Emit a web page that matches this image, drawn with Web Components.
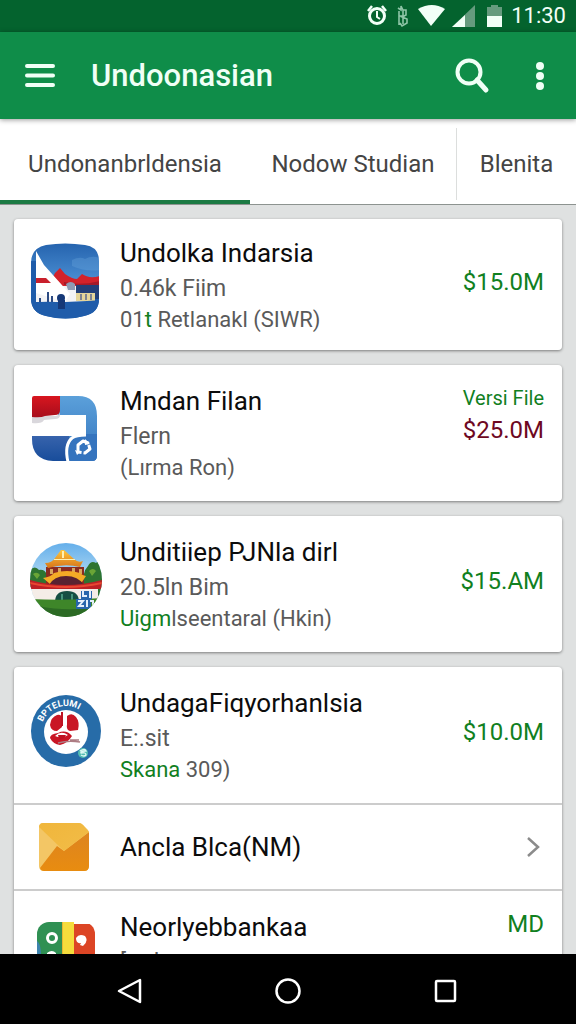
<!DOCTYPE html>
<html lang="id">
<head>
<meta charset="utf-8">
<meta name="viewport" content="width=device-width, initial-scale=1">
<title>Undoonasian</title>
<style>
  html, body {
    height: 100%;
    margin: 0;
  }
  body {
    font-family: Roboto, "Liberation Sans", sans-serif;
    background: #dfe1e1;
    --green: #0f8d49;
    --green-dark: #04632e;
    --green-text: #11801f;
    --red-text: #6e0822;
  }
  .hl {
    color: var(--green-text);
  }
</style>
</head>
<body>
<app-screen>
  <status-bar slot="top" time="11:30"></status-bar>
  <app-bar slot="top">Undoonasian</app-bar>
  <tab-strip slot="top">
    <tab-item selected>Undonanbrldensia</tab-item>
    <tab-item>Nodow Studian</tab-item>
    <tab-item divided>Blenita</tab-item>
  </tab-strip>

  <app-card>
    <app-row compact>
      <svg slot="icon" width="72" height="76" viewBox="0 0 72 76" aria-hidden="true">
        <defs>
          <linearGradient id="sky" x1="0" y1="0" x2="0" y2="1">
            <stop offset="0" stop-color="#2563ae"/><stop offset=".5" stop-color="#4a8ed2"/><stop offset=".75" stop-color="#1f58a4"/><stop offset="1" stop-color="#1d62ae"/>
          </linearGradient>
          <clipPath id="squircle"><path d="M1 20Q1 5 16 2Q35-1 55 2Q69 4 69 18V56Q69 70 54 73Q36 78 16 73Q1 70 1 55Z"/></clipPath>
        </defs>
        <g clip-path="url(#squircle)">
          <path fill="url(#sky)" d="M0 0h72v76H0z"/>
          <path fill="#6ba7de" d="M42 17q8-4 13-1q7-4 15-1v12q-14 2-28-4z" opacity=".35"/>
          <path fill="#f3f3f5" d="M6 39h58v20H6z"/>
          <path fill="#d3222b" d="M22 36l3-6l5-5l5 6q7 5 12 5l5-5q7 5 18 2v10H28z"/>
          <path fill="#a51a28" d="M34 39q16 4 36-1v4H34z"/>
          <path fill="#233f78" d="M46 42h24v14H46z"/>
          <path fill="#e5d59a" d="M46 50h19v8H46z"/>
          <path fill="#7d8292" d="M50 51h2v6h-2zM55 51h2v6h-2zM60 51h2v6h-2z"/>
          <path fill="#8e9bb4" d="M36 41q5-4 9 0v6h-7z"/>
          <path fill="#fff" d="M6 8L14 22L40 51L35 59L6 50z"/>
          <path fill="#c9202c" d="M6 35h10l5 5H6z"/>
          <path fill="#2c4a82" d="M17 49h2v11h-2zM21 53h2v6h-2zM9 55h2v4H9z"/>
          <path fill="#1f5caa" d="M0 60q14-2 26-1q20 0 46-2v20H0zM0 18h6v43H0z"/>
          <circle cx="31" cy="55" r="4" fill="#153877"/><path fill="#153877" d="M28 57h7v9h-7z"/>
        </g>
      </svg>
      Undolka Indarsia
      <span slot="size">0.46k Fiim</span>
      <span slot="note">01<span class="hl">t</span> Retlanakl (SIWR)</span>
      <span slot="price" class="hl">$15.0M</span>
    </app-row>
  </app-card>

  <app-card>
    <app-row>
      <svg slot="icon" width="72" height="72" viewBox="0 0 72 72" aria-hidden="true">
        <defs>
          <linearGradient id="blueLight" x1="0" y1="0" x2="0" y2="1"><stop offset="0" stop-color="#5ba0da"/><stop offset="1" stop-color="#3474bd"/></linearGradient>
          <linearGradient id="blueDeep" x1="0" y1="0" x2="0" y2="1"><stop offset="0" stop-color="#3763ac"/><stop offset="1" stop-color="#184d9b"/></linearGradient>
          <linearGradient id="flagRed" x1="0" y1="0" x2="0" y2="1"><stop offset="0" stop-color="#d8161f"/><stop offset="1" stop-color="#a70d1c"/></linearGradient>
        </defs>
        <path fill="url(#blueLight)" d="M28 3h20q19 0 19 20v40q0 5-5 5H39V42h17V22H28z"/>
        <path fill="#fff" d="M3 22h49q3 0 3 3v18H3z"/>
        <path fill="url(#blueDeep)" d="M2 43h37v25H23Q2 67 2 46z"/>
        <path fill="#cfcdd3" d="M2 23h24q4-1 4-5v4q0 4-5 4l-11 1q-2 4-12 3z" opacity=".8"/>
        <path fill="url(#flagRed)" d="M4 3h26v14q0 5-5 5l-10 1q-4 2-13 1V5q0-2 2-2z"/>
        <path fill="#3574be" d="M37 68q-3-16 5-23q4-4 14-4h11v22q0 5-5 5z"/>
        <path fill="none" stroke="#fff" stroke-width="3" d="M38 69q-4-17 4-24q4-3 14-3"/>
        <path fill="none" stroke="#fff" stroke-width="3" stroke-linejoin="round" stroke-dasharray="12 2" d="M48 52l5-4l5 2l2 6l-5 4l-7-1z"/>
        <path fill="#fff" d="M45 57l5 2l-3 3zM55 46l5 5l-5 1z"/>
      </svg>
      Mndan Filan
      <span slot="size">Flern</span>
      <span slot="note">(Lırma Ron)</span>
      <span slot="tag" class="hl">Versi File</span>
      <span slot="price" style="color: var(--red-text)">$25.0M</span>
    </app-row>
  </app-card>

  <app-card>
    <app-row>
      <svg slot="icon" width="72" height="76" viewBox="0 0 72 76" aria-hidden="true">
        <defs>
          <linearGradient id="air" x1="0" y1="0" x2="0" y2="1"><stop offset="0" stop-color="#63aeea"/><stop offset=".5" stop-color="#b4dbf4"/></linearGradient>
          <linearGradient id="roof" x1="0" y1="0" x2="0" y2="1"><stop offset="0" stop-color="#ffc63a"/><stop offset="1" stop-color="#d7761b"/></linearGradient>
          <clipPath id="roundPark"><ellipse cx="36" cy="38" rx="36" ry="37"/></clipPath>
        </defs>
        <g clip-path="url(#roundPark)">
          <path fill="url(#air)" d="M0 0h72v76H0z"/>
          <path fill="#2e7431" d="M0 28q5-5 9 0q6-1 8 5l2 12H0zM54 32q1-5 4-8q3-6 8-3q4-4 6 4v40H54z"/>
          <path fill="#6aa536" d="M3 32q4-3 7 1l-3 4zM59 29q4-4 7 0l-4 5z"/>
          <path fill="#8b2b21" d="M16 25h38v17H16z"/>
          <path fill="#d9a75e" d="M20 27h3v5h-3zM28 26h3v4h-3zM42 26h3v4h-3zM49 27h3v5h-3z"/>
          <path fill="url(#roof)" d="M31 8h3l10 9q4 4 9 2l-3 6q-15-4-32 1l-3-5q7 0 10-5z"/>
          <path fill="#f4ab26" d="M13 36q8-1 11-5q13-4 26 0q3 3 6 3l-4 6q-16-7-32 2z"/>
          <path fill="#582231" d="M19 43q5-9 17-9t18 9z"/>
          <path fill="#fff0b1" d="M24 17h21v1H24zM32 9h2v7h-2z"/>
          <path fill="#bd2025" d="M0 38q35 10 72 0v9H0z"/>
          <path fill="#e84631" d="M0 40q35 8 72 0v2q-37 8-72 0z"/>
          <path fill="#f5ede7" d="M2 47h66v13H2z"/>
          <path fill="#174f43" d="M25 60q0-11 12-11t12 11z"/><path fill="#47957c" d="M31 52h2v8h-2zM41 52h2v8h-2z"/>
          <path fill="#3e8629" d="M0 57q36 2 72-1v20H0z"/><path fill="#2c6a24" d="M8 64q30 6 56 1v12H8z"/>
          <path fill="#2765ac" d="M51 49h11v8H51zM46 57h15v10H46z"/>
          <path stroke="#e4effb" stroke-width="2" fill="none" d="M53 48v6h4M60 48v8M48 59h5l-4 5h5M57 58v7M60 59h3v5"/>
        </g>
      </svg>
      Unditiiep PJNla dirl
      <span slot="size">20.5ln Bim</span>
      <span slot="note"><span class="hl">Uigm</span>lseentaral (Hkin)</span>
      <span slot="price" class="hl">$15.AM</span>
    </app-row>
  </app-card>

  <app-card>
    <app-row>
      <svg slot="icon" width="72" height="74" viewBox="0 0 72 74" aria-hidden="true">
        <defs>
          <path id="ring" d="M11 37A25 25 0 0 1 61 37"/>
        </defs>
        <ellipse cx="36" cy="37" rx="35" ry="36" fill="#276ca8"/>
        <circle cx="36" cy="38" r="22" fill="#fff"/>
        <text fill="#fff" font-family="Roboto, sans-serif" font-size="9" font-weight="700"><textPath href="#ring" startOffset="9">BPTELUMI</textPath></text>
        <path fill="#c91625" d="M20 31q1-8 7-10q5-1 5 4v8l-5 4q-6 0-7-6zM37 22q5-4 9 1q4 5 2 13l-8 1q-4-1-3-7z"/>
        <path fill="#c91625" d="M20 44q0-4 8-5q8-4 14 3q-4 7-12 9q-7-1-10-7z"/>
        <path fill="#fff" d="M25 42q6-6 13-1q-6 4-13 1z"/>
        <path fill="#be1222" d="M28 41h8q-2 5-7 4zM31 18h2v14h-2z"/>
        <path fill="none" stroke="#ad7c83" stroke-width="1.5" d="M28 49q10-3 22-1M40 46h9"/>
        <circle cx="53" cy="59" r="5" fill="#54bdb2"/>
        <path fill="none" stroke="#e1faf5" stroke-width="1.3" d="M50 57q5-3 6 0q-6 0-5 2q5-1 5 2q-2 2-5 0"/>
      </svg>
      UndagaFiqyorhanlsia
      <span slot="size">E:.sit</span>
      <span slot="note"><span class="hl">Skana</span> 309)</span>
      <span slot="price" class="hl">$10.0M</span>
    </app-row>
    <link-row href="#ancla">
      <svg slot="icon" width="52" height="50" viewBox="0 0 52 50" aria-hidden="true">
        <defs>
          <linearGradient id="flap" x1="0" y1="0" x2="1" y2="1"><stop offset="0" stop-color="#f0b63b"/><stop offset="1" stop-color="#f2bc48"/></linearGradient>
          <linearGradient id="pocket" x1="0" y1="0" x2="0" y2="1"><stop offset="0" stop-color="#dd8420"/><stop offset="1" stop-color="#e88c10"/></linearGradient>
        </defs>
        <path fill="#f3c665" d="M5 1h36q2 0 4 2l5 5q1 1 1 4v32q0 5-5 5H6q-5 0-5-5V5q0-4 4-4z"/>
        <path fill="url(#pocket)" d="M19 24l7 5l25-19v34q0 5-5 5H6q-3 0-4-3z"/>
        <path fill="url(#flap)" d="M1 5q1-4 4-4h36q2 0 4 2l6 7L26 29z"/>
      </svg>
      Ancla Blca(NM)
    </link-row>
    <app-row style="--price-row: 40px">
      <svg slot="icon" width="60" height="66" viewBox="0 0 60 66" aria-hidden="true">
        <defs><clipPath id="tile"><rect x="1" y="0" width="58" height="66" rx="12"/></clipPath></defs>
        <g clip-path="url(#tile)">
          <path fill="#2f9053" d="M0 0h28v66H0z"/><path fill="#3d83ad" d="M0 18q5 3 5 15v33H0z"/>
          <path fill="#f5dc3c" d="M27 0h11v66H27z"/>
          <path fill="#dc4525" d="M38 2h22v64H38z"/><path fill="#e7b534" d="M26 0h1v66h-1z"/>
        </g>
        <circle cx="16" cy="16" r="4.5" fill="none" stroke="#fff" stroke-width="3"/>
        <path fill="#fff" d="M11 31q5-4 9 0v5h-9zM40 16q3-5 9-2q4 5-2 10l-3-1l1-2q-5 1-5-5z"/>
      </svg>
      Neorlyebbankaa
      <span slot="size">[ttalr</span>
      <span slot="tag" class="hl" style="font-size: 24px">MD</span>
      <span slot="price">$27.4M</span>
    </app-row>
  </app-card>

  <nav-bar slot="bottom"></nav-bar>
</app-screen>

<script>
  class BaseElement extends HTMLElement {
    connectedCallback() {
      if (this.shadowRoot) return;
      this.attachShadow({ mode: 'open' });
      this.shadowRoot.innerHTML = this.render();
    }
  }

  class AppScreen extends BaseElement {
    render() {
      return `
        <style>
          :host {
            display: flex;
            flex-direction: column;
            height: 100vh;
          }
          header {
            position: relative;
            flex: none;
          }
          main {
            flex: 1;
            min-height: 0;
            box-sizing: border-box;
            overflow-y: auto;
            scrollbar-width: none;
            display: flex;
            flex-direction: column;
            gap: 15px;
            padding: 14px 14px 0;
          }
        </style>
        <header><slot name="top"></slot></header>
        <main><slot></slot></main>
        <slot name="bottom"></slot>
      `;
    }
  }
  customElements.define('app-screen', AppScreen);

  class StatusBar extends BaseElement {
    render() {
      return `
        <style>
          :host {
            display: flex;
            align-items: center;
            justify-content: flex-end;
            gap: 6px;
            height: 32px;
            padding-right: 10px;
            background: var(--green-dark);
            color: #f2fff7;
            font-size: 22px;
            line-height: 32px;
          }
          svg { display: block; }
        </style>
        <svg width="138" height="26" viewBox="0 0 138 26" aria-hidden="true">
          <g fill="none" stroke="#f2fff7" stroke-width="3">
            <circle cx="10" cy="13" r="7.5"/>
            <path d="M1 8l4-5M15 3l4 5" stroke-width="2.5"/>
            <path d="M10 8v6l3 2" stroke-width="2"/>
          </g>
          <path d="M31 5l3 2V3l2 4h3v5l-4 2l5 2v4l-5 3l-2-3M32 8v14M36 7v14M32 13h6" fill="none" stroke="#8fc5a7" stroke-width="1.6"/>
          <path fill="#f2fff7" d="M51 6q14-8 27 0L64 23z"/>
          <path fill="#669b7e" d="M108 2v22H85z"/>
          <path fill="#f2fff7" d="M98 12v12H85z"/>
          <path fill="#669b7e" d="M120 4h4V2h7v2h4v10h-15z"/>
          <path fill="#f2fff7" d="M120 13h15v11h-15z"/>
        </svg>
        <time>${this.getAttribute('time')}</time>
      `;
    }
  }
  customElements.define('status-bar', StatusBar);

  class AppBar extends BaseElement {
    render() {
      return `
        <style>
          :host {
            display: flex;
            align-items: center;
            height: 87px;
            padding: 0 16px;
            background: var(--green);
            color: #f0fff6;
            position: relative;
            z-index: 1;
            box-shadow: 0 1px 5px rgba(0, 0, 0, .4);
          }
          h1 {
            flex: 1;
            margin: 0 0 0 27px;
            font-size: 31px;
            font-weight: 500;
            line-height: 40px;
          }
          button {
            flex: none;
            width: 48px;
            height: 48px;
            padding: 0;
            border: 0;
            background: none;
            color: inherit;
            display: grid;
            place-items: center;
          }
          .search { margin-right: 20px; }
          .more { margin-right: -4px; }
        </style>
        <button type="button" aria-label="Menu">
          <svg width="30" height="26" viewBox="0 0 30 26"><path d="M2 3h26M2 12.5h26M2 22h26" stroke="currentColor" stroke-width="4" stroke-linecap="round"/></svg>
        </button>
        <h1><slot></slot></h1>
        <button type="button" class="search" aria-label="Cari">
          <svg width="36" height="36" viewBox="0 0 36 36" fill="none" stroke="currentColor"><circle cx="15" cy="14" r="11.5" stroke-width="4"/><path d="M23 22l9 10" stroke-width="5" stroke-linecap="round"/></svg>
        </button>
        <button type="button" class="more" aria-label="Lainnya">
          <svg width="10" height="30" viewBox="0 0 10 30" fill="currentColor"><circle cx="5" cy="5" r="4"/><circle cx="5" cy="15" r="4"/><circle cx="5" cy="25" r="4"/></svg>
        </button>
      `;
    }
  }
  customElements.define('app-bar', AppBar);

  class TabStrip extends BaseElement {
    render() {
      this.setAttribute('role', 'tablist');
      return `
        <style>
          :host {
            display: grid;
            grid-template-columns: 250fr 206fr 120fr;
            height: 86px;
            box-sizing: border-box;
            background: #fff;
            border-bottom: 1px solid #8d9390;
          }
        </style>
        <slot></slot>
      `;
    }
  }
  customElements.define('tab-strip', TabStrip);

  class TabItem extends BaseElement {
    render() {
      const selected = this.hasAttribute('selected');
      return `
        <style>
          :host { display: flex; }
          button {
            flex: 1;
            min-width: 0;
            padding: 8px 0 0;
            border: 0;
            border-bottom: 4px solid transparent;
            background: none;
            color: #444;
            font: 400 24px/32px Roboto, "Liberation Sans", sans-serif;
            white-space: nowrap;
          }
          :host([selected]) button { border-bottom-color: #1b7a43; }
          :host([divided])::before {
            content: '';
            width: 1px;
            margin: 9px 0 4px;
            background: #dcdedd;
          }
        </style>
        <button type="button" role="tab" aria-selected="${selected}"><slot></slot></button>
      `;
    }
  }
  customElements.define('tab-item', TabItem);

  // The 2px gap lets the card's grey show between rows as a divider
  class AppCard extends BaseElement {
    render() {
      return `
        <style>
          :host {
            flex: none;
            display: flex;
            flex-direction: column;
            gap: 2px;
            overflow: hidden;
            border-radius: 4px;
            background: #ccc;
            box-shadow: 0 1px 3px rgba(0, 0, 0, .45);
          }
        </style>
        <slot></slot>
      `;
    }
  }
  customElements.define('app-card', AppCard);

  class AppRow extends BaseElement {
    render() {
      return `
        <style>
          :host {
            display: flex;
            align-items: flex-start;
            gap: 18px;
            padding: 18px 18px 20px 16px;
            background: #fff;
            white-space: nowrap;
          }
          :host([compact]) { padding-top: 16px; padding-bottom: 17px; }
          .icon {
            flex: none;
            width: 72px;
            height: 92px;
            display: grid;
            place-items: center;
          }
          .info { flex: 1; min-width: 0; }
          h2 {
            margin: 0;
            font-size: 26px;
            font-weight: 400;
            line-height: 36px;
            color: #0c0c0c;
          }
          .size {
            font-size: 23px;
            line-height: 36px;
            color: #5a5a5a;
          }
          .note {
            font-size: 22px;
            line-height: 26px;
            color: #5a5a5a;
          }
          .trail {
            display: grid;
            grid-template-rows: var(--price-row, 30px) 34px;
            text-align: right;
          }
          .tag { font-size: 20px; line-height: 30px; }
          .price { font-size: 24px; line-height: 34px; }
        </style>
        <div class="icon"><slot name="icon"></slot></div>
        <div class="info">
          <h2><slot></slot></h2>
          <div class="size"><slot name="size"></slot></div>
          <div class="note"><slot name="note"></slot></div>
        </div>
        <div class="trail">
          <div class="tag"><slot name="tag"></slot></div>
          <div class="price"><slot name="price"></slot></div>
        </div>
      `;
    }
  }
  customElements.define('app-row', AppRow);

  class LinkRow extends BaseElement {
    render() {
      return `
        <style>
          :host { display: block; background: #fff; }
          a {
            display: flex;
            align-items: center;
            gap: 18px;
            height: 84px;
            padding: 0 18px 0 16px;
            color: #0c0c0c;
            font-size: 26px;
            line-height: 36px;
            text-decoration: none;
          }
          .icon { flex: none; width: 68px; padding-right: 4px; display: grid; place-items: center; }
          .label { flex: 1; }
          svg { margin-right: 4px; }
        </style>
        <a href="${this.getAttribute('href')}">
          <span class="icon"><slot name="icon"></slot></span>
          <span class="label"><slot></slot></span>
          <svg width="14" height="22" viewBox="0 0 14 22" fill="none" stroke="#8b8b8b" stroke-width="2.5" aria-hidden="true"><path d="M2 2l10 9L2 20"/></svg>
        </a>
      `;
    }
  }
  customElements.define('link-row', LinkRow);

  class NavBar extends BaseElement {
    render() {
      return `
        <style>
          :host {
            flex: none;
            display: flex;
            align-items: center;
            justify-content: center;
            gap: 110px;
            height: 70px;
            padding-top: 4px;
            box-sizing: border-box;
            background: #000;
            color: #fff;
          }
          button {
            width: 48px;
            height: 48px;
            padding: 0;
            border: 0;
            background: none;
            color: inherit;
            display: grid;
            place-items: center;
          }
          svg { fill: none; stroke: currentColor; stroke-width: 2.5; stroke-linejoin: round; }
        </style>
        <button type="button" aria-label="Kembali">
          <svg width="26" height="28" viewBox="0 0 26 28"><path d="M23 3v22L2 14z"/></svg>
        </button>
        <button type="button" aria-label="Beranda">
          <svg width="28" height="28" viewBox="0 0 28 28"><circle cx="14" cy="14" r="11.5"/></svg>
        </button>
        <button type="button" aria-label="Terbaru">
          <svg width="24" height="24" viewBox="0 0 24 24"><rect x="2" y="2" width="19" height="20" rx="1"/></svg>
        </button>
      `;
    }
  }
  customElements.define('nav-bar', NavBar);
</script>
</body>
</html>
